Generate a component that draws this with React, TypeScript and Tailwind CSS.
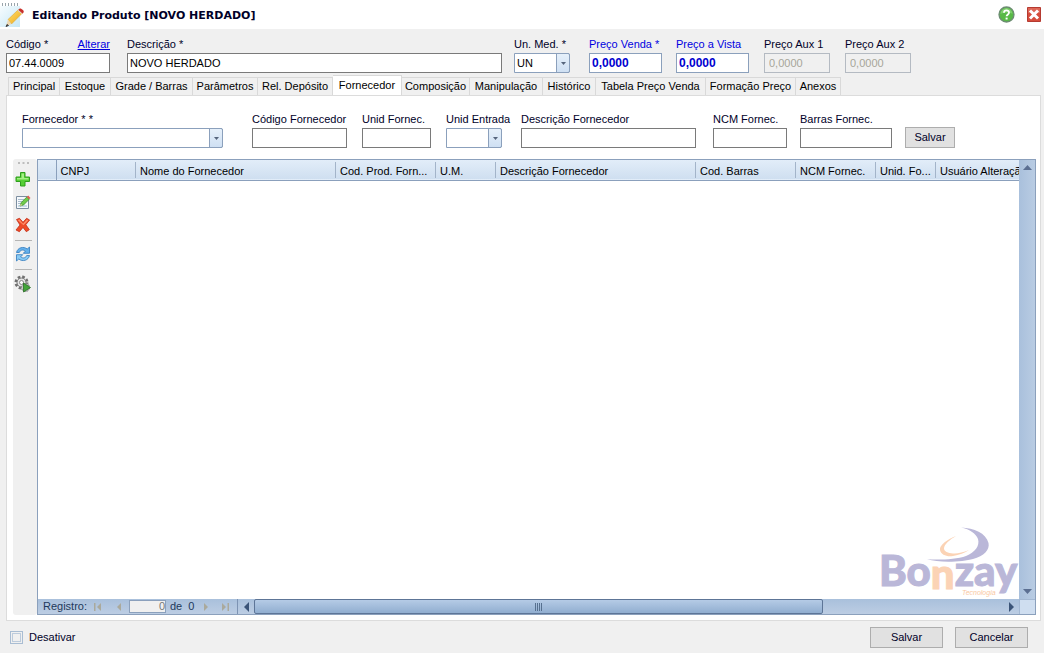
import React, { useState } from 'react';
import { clsx } from 'clsx';

const tabs = [
  { name: 'Principal', width: 'w-[52px]' },
  { name: 'Estoque', width: 'w-[51px]' },
  { name: 'Grade / Barras', width: 'w-[82px]' },
  { name: 'Parâmetros', width: 'w-[65px]' },
  { name: 'Rel. Depósito', width: 'w-[75px]' },
  { name: 'Fornecedor', width: 'w-[69px]' },
  { name: 'Composição', width: 'w-[68px]' },
  { name: 'Manipulação', width: 'w-[73px]' },
  { name: 'Histórico', width: 'w-[53px]' },
  { name: 'Tabela Preço Venda', width: 'w-[110px]' },
  { name: 'Formação Preço', width: 'w-[90px]' },
  { name: 'Anexos', width: 'w-[45px]' },
];

const columns = [
  { name: 'CNPJ', width: 'w-[80px]' },
  { name: 'Nome do Fornecedor', width: 'w-[200px]' },
  { name: 'Cod. Prod. Forn...', width: 'w-[100px]' },
  { name: 'U.M.', width: 'w-[60px]' },
  { name: 'Descrição Fornecedor', width: 'w-[200px]' },
  { name: 'Cod. Barras', width: 'w-[100px]' },
  { name: 'NCM Fornec.', width: 'w-[80px]' },
  { name: 'Unid. Fo...', width: 'w-[60px]' },
  { name: 'Usuário Alteração', width: 'w-[120px]' },
];

type FieldProps = {
  id: string;
  label: string;
  className?: string;
  labelClass?: string;
  inputClass?: string;
  value?: string;
  disabled?: boolean;
};

function Field({ id, label, className, labelClass, inputClass, value = '', disabled }: FieldProps) {
  return (
    <div className={clsx('flex flex-col', className)}>
      <label htmlFor={id} className={clsx('h-[17px] leading-[16px] whitespace-nowrap', labelClass)}>
        {label}
      </label>
      <input
        id={id}
        type="text"
        defaultValue={value}
        disabled={disabled}
        className={clsx('h-[20px] w-full border px-[2px] outline-none', inputClass || 'border-[#7a7a7a] bg-white text-black')}
      />
    </div>
  );
}

function SelectField({ id, label, className, options }: { id: string; label: string; className?: string; options: string[] }) {
  return (
    <div className={clsx('flex flex-col', className)}>
      <label htmlFor={id} className="h-[17px] leading-[16px] whitespace-nowrap">{label}</label>
      <div className="relative">
        <select id={id} className="block h-[20px] w-full appearance-none rounded-r-[2px] border border-[#8ba0bc] bg-white pl-[2px] pr-[16px] text-black outline-none">
          {options.map((o) => <option key={o}>{o}</option>)}
        </select>
        <span className="pointer-events-none absolute right-0 top-0 flex h-[20px] w-[14px] items-center justify-center rounded-r-[2px] border border-[#8ba0bc] bg-gradient-to-b from-[#e6f0fa] to-[#cfe0f3]">
          <svg width="5" height="3" viewBox="0 0 5 3"><path d="M0 0h5L2.500 3z" fill="#56657c" /></svg>
        </span>
      </div>
    </div>
  );
}

function PushButton({ children, className }: { children: React.ReactNode; className: string }) {
  return (
    <button className={clsx('h-[21px] border border-[#adadad] bg-[#e1e1e1] text-[#000028] hover:bg-[#e5f1fb]', className)}>
      {children}
    </button>
  );
}

function PencilIcon() {
  return (
    <svg width="26" height="26" viewBox="0 0 26 26" aria-hidden="true">
      <defs>
        <linearGradient id="paper" x1="0" y1="0" x2="1" y2="1">
          <stop offset="0" stopColor="#f7fcfe" />
          <stop offset="1" stopColor="#c5e7f6" />
        </linearGradient>
        <linearGradient id="wood" x1="0" y1="0" x2="1" y2="1">
          <stop offset="0" stopColor="#ffe070" />
          <stop offset="1" stopColor="#eea817" />
        </linearGradient>
      </defs>
      <path d="M0 4h20v21H0z" fill="url(#paper)" />
      <path d="M2.500 1v3M5.500 1v3M8.500 1v3M11.500 1v3M14.500 1v3M17.500 1v3" stroke="#99a5ac" />
      <path d="M8 17.500L18.500 7.500l4 3.500-11 11z" fill="url(#wood)" stroke="#d99a20" strokeWidth=".5" />
      <path d="M8 17.500l3.500 4.500-5.500 2z" fill="#ecd7b2" />
      <path d="M7 22.500l-1 2 2.500-1z" fill="#444" stroke="#444" />
      <path d="M17.500 8.500l1.500-1.500 4 3.500-1.500 1.500z" fill="#ddd6cf" />
      <path d="M19 7c1-2 6 1.500 4.500 3.500L22.500 11.500 18.500 8z" fill="#c9302b" />
    </svg>
  );
}

function HelpIcon() {
  return (
    <svg width="17" height="17" viewBox="0 0 17 17">
      <circle cx="8.500" cy="8.500" r="7.500" fill="#58b947" stroke="#6c8c72" strokeWidth="1.300" />
      <path d="M2.500 8a6 6 0 0112 0c-3-2-8-2-12 0z" fill="#8fd57e" opacity=".7" />
      <path d="M6 6.700c.1-3.200 5.200-3.100 5 .1-.1 1.600-2.400 1.700-2.400 3.500" fill="none" stroke="#fff" strokeWidth="1.800" />
      <path d="M7.600 11.600h2v1.900h-2z" fill="#fff" />
    </svg>
  );
}

function CloseIcon() {
  return (
    <svg width="14" height="15" viewBox="0 0 14 15">
      <path d="M.5.5h13v14H.5z" fill="#d64c3c" stroke="#b53a31" />
      <path d="M1 1h12v5H1z" fill="#e27868" opacity=".6" />
      <path d="M3 3.500l8 8M11 3.500l-8 8" stroke="#fff" strokeWidth="3" />
    </svg>
  );
}

function AddIcon() {
  return (
    <svg width="16" height="16" viewBox="0 0 16 16">
      <path d="M5.500 1.500h4.500v4.500h4.500v4.500H10v4.500H5.500v-4.500H1V6h4.500z" fill="#55cf35" stroke="#2e9e1d" />
      <path d="M6.500 2.500H9V7h4.500v1.500H2V7h4.500z" fill="#a5ef86" />
    </svg>
  );
}

function EditIcon() {
  return (
    <svg width="16" height="16" viewBox="0 0 16 16">
      <path d="M1.500 2.500h12v12h-12z" fill="#f6f9fc" stroke="#7c8ea0" />
      <path d="M3 5.500h6M3 7.500h5M3 9.500h3" stroke="#a9bccd" />
      <path d="M3 11h9v2H3z" fill="#c9dae9" />
      <path d="M5 12l1.300-3.500 5.500-5.500 2.400 2.300L8.500 11z" fill="#6fcb4b" stroke="#398523" strokeWidth=".7" />
      <path d="M11.800 3l1.400-1.400 2.300 2.300-1.400 1.400z" fill="#e0604e" />
      <path d="M5 12l.8-2.200 1.500 1.400z" fill="#e9d3a0" />
    </svg>
  );
}

function DeleteIcon() {
  return (
    <svg width="16" height="16" viewBox="0 0 16 16">
      <path d="M1.500 2.500l3-1.200 3.500 4 3.600-4 3 1.700-3.800 4.700 3.500 5-3 2-3.300-4.300-3.600 4.300L1 13l4-5z" fill="#ee4b28" stroke="#c22d16" strokeWidth=".8" />
      <path d="M2.600 3l2-.5L8 6.800l4-4.300 1.200.9L8.500 8.200z" fill="#ff8d69" />
    </svg>
  );
}

function RefreshIcon() {
  return (
    <svg width="16" height="16" viewBox="0 0 16 16">
      <path d="M1.500 6.500C2.500 1.500 8.500 0 12.200 3l2.300-2v6.300H8.300l2.100-2.200C7.500 3 5 4.500 4.300 6.500z" fill="#65b1ec" stroke="#2f78bd" strokeWidth=".8" />
      <path d="M14.500 9.500c-1 5-7 6.500-10.700 3.500l-2.300 2V8.700h6.200l-2.100 2.200c2.900 2.100 5.400.6 6.100-1.400z" fill="#8bccf5" stroke="#2f78bd" strokeWidth=".8" />
    </svg>
  );
}

function RunIcon() {
  return (
    <svg width="18" height="18" viewBox="0 0 18 18">
      <circle cx="7.500" cy="7.500" r="5.500" fill="none" stroke="#717171" strokeWidth="3" strokeDasharray="2.500 1.820" />
      <circle cx="7.500" cy="7.500" r="4.500" fill="#e4e4e4" stroke="#777" />
      <circle cx="7.500" cy="7.500" r="2" fill="#fff" stroke="#888" />
      <circle cx="11.500" cy="12.500" r="4" fill="#c9cbc9" stroke="#777" strokeDasharray="2 1" />
      <path d="M9.500 8l7 4.500-7 4.500z" fill="#43a53a" stroke="#286f24" strokeWidth=".8" />
    </svg>
  );
}

function BonzayLogo() {
  return (
    <svg width="140" height="76" viewBox="0 0 140 76" className="pointer-events-none absolute bottom-0 right-0" aria-label="Bonzay Tecnologia">
      <path d="M48 36.300C60 40 84 39 94 36c11-3 17-9 15.500-16C107 10 95 5 82 4.500c9 2 15 6 17 11.500 2 7-3 13-12 17-10 3.500-26 4-39 3.300z" fill="#bab7d8" />
      <path d="M77 13c-8 3-17 9-16 14 1 5 7 7 13 6 6-1 12-3 16-6-6 2.500-12 4-16 3.500-5-.4-9-2-9-5 0-4 6-9 12-12.500z" fill="#fbd3b5" />
      <text x="0" y="63" fontFamily="Lato, sans-serif" fontWeight="900" fontSize="42" fill="#bab7d8" stroke="#bab7d8" strokeWidth="1">
        Bo<tspan dy="3" fill="#fbd3b5" stroke="#fbd3b5">n</tspan><tspan dy="-3">zay</tspan>
      </text>
      <text x="83" y="72" fontFamily="Liberation Sans, sans-serif" fontStyle="italic" fontSize="7" fill="#f9c7a2">Tecnologia</text>
    </svg>
  );
}

function Arrow({ dir, bar, color = '#aaa99c' }: { dir: 'left' | 'right'; bar?: boolean; color?: string }) {
  return (
    <svg width="10" height="8" viewBox="0 0 10 8">
      {dir === 'left' ? <path d="M8 0v8L4 4z" fill={color} /> : <path d="M2 0v8l4-4z" fill={color} />}
      {bar && <path d={dir === 'left' ? 'M1 0h1.500v8H1z' : 'M7.500 0H9v8H7.500z'} fill={color} />}
    </svg>
  );
}

function ScrollArrow({ dir }: { dir: 'left' | 'right' }) {
  return (
    <svg width="5" height="10" viewBox="0 0 5 10">
      <path d={dir === 'left' ? 'M5 0v10L0 5z' : 'M0 0v10l5-5z'} fill="#3b5478" />
    </svg>
  );
}

function SupplierGrid() {
  return (
    <div className="flex min-w-0 flex-1 flex-col border border-[#8ba0bc] bg-white">
      <div className="flex flex-1">
        <div className="relative min-w-0 flex-1 overflow-hidden">
          <table className="w-[1018px] table-fixed border-collapse text-left">
            <thead>
              <tr className="h-[20px] border-b border-[#8ba0bc] bg-gradient-to-b from-[#e2edf9] to-[#cfdff0]">
                <th className="w-[18px] border-r border-[#8ba0bc]" />
                {columns.map((c) => (
                  <th key={c.name} className={clsx('p-0 font-normal text-black', c.width)}>
                    <div className="overflow-hidden whitespace-nowrap border-r border-[#a3b4c9] pl-[4px] pt-[2px] leading-[14px]">{c.name}</div>
                  </th>
                ))}
              </tr>
            </thead>
            <tbody />
          </table>
          <BonzayLogo />
        </div>
        <div className="flex w-[16px] flex-col items-center justify-between bg-gradient-to-r from-[#a9c0dc] to-[#b9cce3] py-[5px]">
          <button aria-label="Rolar para cima">
            <svg width="9" height="5" viewBox="0 0 9 5" className="block"><path d="M0 5h9L4.500 0z" fill="#5b6f92" /></svg>
          </button>
          <button aria-label="Rolar para baixo">
            <svg width="9" height="5" viewBox="0 0 9 5" className="block"><path d="M0 0h9L4.500 5z" fill="#5b6f92" /></svg>
          </button>
        </div>
      </div>

      <div className="flex h-[15px] bg-gradient-to-b from-[#a9c0dc] to-[#bccde3]">
        <div className="flex w-[200px] items-center border-r border-[#7d93b3] pl-[5px] text-[#1e395b]">
          <label htmlFor="registro" className="w-[50px]">Registro:</label>
          <button aria-label="Primeiro" className="w-[20px]"><Arrow dir="left" bar /></button>
          <button aria-label="Anterior" className="w-[16px]"><Arrow dir="left" /></button>
          <input id="registro" type="text" defaultValue="0" className="h-[13px] w-[37px] border border-[#8ba0bc] bg-[#f0f0f0] text-right text-[#777]" />
          <span className="w-[36px] whitespace-pre pl-[4px]">de  0</span>
          <button aria-label="Próximo" className="w-[18px]"><Arrow dir="right" /></button>
          <button aria-label="Último"><Arrow dir="right" bar /></button>
        </div>
        <button aria-label="Rolar para a esquerda" className="flex w-[16px] items-center justify-center"><ScrollArrow dir="left" /></button>
        <div className="flex flex-1">
          <div className="flex w-[76%] items-center justify-center gap-px rounded-[2px] border border-[#5d7597] bg-gradient-to-b from-[#b5cbe6] to-[#91aed0]">
            {[0, 1, 2, 3].map((n) => <span key={n} className="h-[8px] w-px bg-[#56708f]" />)}
          </div>
        </div>
        <button aria-label="Rolar para a direita" className="flex w-[16px] items-center justify-center"><ScrollArrow dir="right" /></button>
        <div className="w-[16px] border-l border-t border-[#a3b8d3] bg-[#cfdef0]" />
      </div>
    </div>
  );
}

export default function App() {
  const [activeTab, setActiveTab] = useState('Fornecedor');

  return (
    <div className="flex min-h-screen flex-col bg-[#f0f0f0] font-['Liberation_Sans',Arial,sans-serif] text-[11px] text-[#000028]">
      <header className="flex h-[29px] items-center justify-between bg-white pr-[3px]">
        <div className="flex items-center gap-[6px]">
          <PencilIcon />
          <h1 className="pt-[3px] font-['DejaVu_Sans',Verdana,sans-serif] text-[11px] font-bold">Editando Produto [NOVO HERDADO]</h1>
        </div>
        <div className="flex items-center gap-[12px]">
          <button aria-label="Ajuda"><HelpIcon /></button>
          <button aria-label="Fechar"><CloseIcon /></button>
        </div>
      </header>

      <section className="flex pl-[6px] pr-[133px] pt-[7px]">
        <div className="relative w-[104px]">
          <Field id="codigo" label="Código *" value="07.44.0009" />
          <a href="#alterar" className="absolute right-0 top-0 leading-[16px] text-[#0000e0] underline">Alterar</a>
        </div>
        <Field id="descricao" label="Descrição *" value="NOVO HERDADO" className="ml-[17px] flex-1" />
        <SelectField id="unMed" label="Un. Med. *" options={['UN']} className="ml-[12px] w-[56px]" />
        <Field id="venda" label="Preço Venda *" value="0,0000" className="ml-[19px] w-[73px]" labelClass="text-[#0000e0]" inputClass="border-[#8ba0bc] bg-white text-[12px] font-bold text-[#0000d0]" />
        <Field id="vista" label="Preço a Vista" value="0,0000" className="ml-[14px] w-[73px]" labelClass="text-[#0000e0]" inputClass="border-[#8ba0bc] bg-white text-[12px] font-bold text-[#0000d0]" />
        <Field id="aux1" label="Preço Aux 1" value="0,0000" disabled className="ml-[15px] w-[66px]" inputClass="border-[#b4bac2] bg-[#f0f0f0] px-[4px] text-[#a7a69a]" />
        <Field id="aux2" label="Preço Aux 2" value="0,0000" disabled className="ml-[15px] w-[66px]" inputClass="border-[#b4bac2] bg-[#f0f0f0] px-[4px] text-[#a7a69a]" />
      </section>

      <nav role="tablist" className="flex items-end pl-[8px] pt-[2px]">
        {tabs.map((tab) => (
          <button
            key={tab.name}
            role="tab"
            aria-selected={tab.name === activeTab}
            onClick={() => setActiveTab(tab.name)}
            className={clsx(
              'whitespace-nowrap border-r border-t border-[#d9d9d9] text-center text-black first:border-l',
              tab.width,
              tab.name === activeTab ? 'h-[20px] bg-white' : 'h-[18px] bg-[#f0f0f0]'
            )}
          >
            {tab.name}
          </button>
        ))}
      </nav>

      <main className="ml-[6px] mr-[3px] flex flex-1 flex-col border border-[#dcdcdc] bg-white pb-[5px] pr-[4px]">
        <div className="flex items-end pl-[15px] pr-[81px] pt-[15px]">
          <SelectField id="fornecedor" label="Fornecedor * *" options={['']} className="w-[201px]" />
          <Field id="codFornecedor" label="Código Fornecedor" className="ml-[29px] w-[95px]" />
          <Field id="unidFornec" label="Unid Fornec." className="ml-[15px] w-[69px]" />
          <SelectField id="unidEntrada" label="Unid Entrada" options={['']} className="ml-[15px] w-[56px]" />
          <Field id="descFornecedor" label="Descrição Fornecedor" className="ml-[19px] flex-1" />
          <Field id="ncm" label="NCM Fornec." className="ml-[17px] w-[74px]" />
          <Field id="barras" label="Barras Fornec." className="ml-[13px] w-[92px]" />
          <PushButton className="ml-[13px] w-[50px]">Salvar</PushButton>
        </div>

        <div className="flex flex-1 pl-[6px] pt-[11px]">
          <div className="flex w-[24px] flex-col items-center rounded-[3px] bg-[#f0f0f0] pr-[4px]">
            <svg width="11" height="2" viewBox="0 0 11 2" className="my-[3px]"><path d="M0 0h2v2H0zM4.500 0h2v2h-2zM9 0h2v2H9z" fill="#bdbdbd" /></svg>
            <button aria-label="Adicionar" className="mt-[4px]"><AddIcon /></button>
            <button aria-label="Editar" className="mt-[7px]"><EditIcon /></button>
            <button aria-label="Excluir" className="mt-[7px]"><DeleteIcon /></button>
            <span className="mt-[7px] h-px w-[17px] bg-[#b5b5b5]" />
            <button aria-label="Atualizar" className="mt-[5px]"><RefreshIcon /></button>
            <span className="mt-[7px] h-px w-[17px] bg-[#b5b5b5]" />
            <button aria-label="Executar" className="mt-[5px]"><RunIcon /></button>
          </div>
          <SupplierGrid />
        </div>
      </main>

      <footer className="flex h-[32px] items-center justify-between pl-[10px] pr-[16px]">
        <label className="flex items-center gap-[6px]">
          <input type="checkbox" className="size-[13px] appearance-none border border-[#a9bdd3] bg-[#f0f0f0] shadow-[inset_0_0_0_1px_#f0f0f0,inset_0_0_0_2px_#bccbdc] checked:bg-[#8ba0bc]" />
          Desativar
        </label>
        <div className="flex gap-[12px]">
          <PushButton className="w-[73px]">Salvar</PushButton>
          <PushButton className="w-[73px]">Cancelar</PushButton>
        </div>
      </footer>
    </div>
  );
}
